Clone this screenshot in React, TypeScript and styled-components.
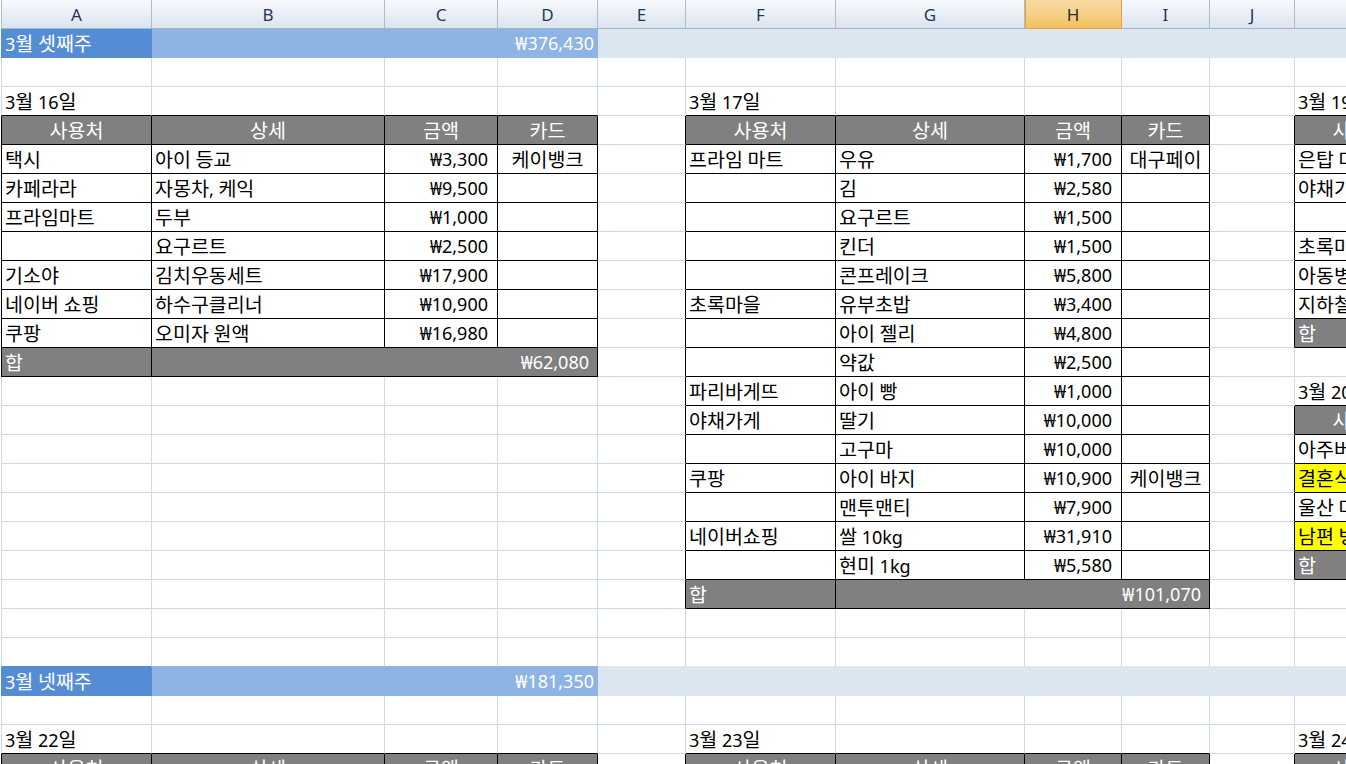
import React from "react";
import styled, { createGlobalStyle, css } from "styled-components";

const GlobalStyle = createGlobalStyle`
  html, body { margin: 0; padding: 0; background: #ffffff; overflow: hidden; }
  #root { width: 1346px; height: 764px; overflow: hidden; }
`;

const C = {
  gray: "#808080",
  dark: "#548DD4",
  mid: "#8DB4E2",
  light: "#DCE6F1",
  yellow: "#FFFF00",
  grid: "#D0D7E5",
  black: "#000000",
  white: "#FFFFFF",
};

const COLS = [
  { l: "A", w: 151 },
  { l: "B", w: 233 },
  { l: "C", w: 113 },
  { l: "D", w: 100 },
  { l: "E", w: 88 },
  { l: "F", w: 150 },
  { l: "G", w: 189 },
  { l: "H", w: 97 },
  { l: "I", w: 88 },
  { l: "J", w: 85 },
  { l: "K", w: 130 },
];
const NCOLS = COLS.length;
const NROWS = 26;
const SELECTED_COL = "H";

type Spec = {
  t?: string;
  a?: "l" | "c" | "r";
  bg?: string;
  fg?: string;
  span?: number;
  tb?: boolean;
  pr?: number;
  covered?: boolean;
};

function buildSheet(): Spec[][] {
  const g: Spec[][] = Array.from({ length: NROWS + 2 }, () =>
    Array.from({ length: NCOLS + 1 }, () => ({}))
  );
  const set = (r: number, c: number, s: Spec) => {
    if (c >= NCOLS) return;
    g[r][c] = { ...g[r][c], ...s };
  };

  const band = (r: number, label: string, total: string) => {
    set(r, 0, { t: label, bg: C.dark, fg: C.white });
    [1, 2, 3].forEach((c) => set(r, c, { bg: C.mid }));
    set(r, 3, { t: total, a: "r", fg: C.white, pr: 3 });
    for (let c = 4; c < NCOLS; c++) set(r, c, { bg: C.light });
  };

  const labels = ["사용처", "상세", "금액", "카드"];
  const header = (r: number, c0: number) => {
    labels.forEach((lb, i) =>
      set(r, c0 + i, { t: lb, a: "c", bg: C.gray, fg: C.white, tb: true })
    );
  };

  const item = (
    r: number,
    c0: number,
    place: string,
    detail: string,
    amount: string,
    card = "",
    bg?: string
  ) => {
    set(r, c0, { t: place, tb: true, bg });
    set(r, c0 + 1, { t: detail, tb: true });
    set(r, c0 + 2, { t: amount, a: "r", pr: 9, tb: true });
    set(r, c0 + 3, { t: card, a: "c", tb: true });
  };

  const sum = (r: number, c0: number, total: string) => {
    set(r, c0, { t: "합", bg: C.gray, fg: C.white, tb: true });
    set(r, c0 + 1, { t: total, a: "r", pr: 8, bg: C.gray, fg: C.white, tb: true, span: 3 });
    set(r, c0 + 2, { covered: true, bg: C.gray, tb: true });
    set(r, c0 + 3, { covered: true, bg: C.gray, tb: true });
  };

  // week 3
  band(1, "3월 셋째주", "₩376,430");

  // 3월 16일
  set(3, 0, { t: "3월 16일" });
  header(4, 0);
  item(5, 0, "택시", "아이 등교", "₩3,300", "케이뱅크");
  item(6, 0, "카페라라", "자몽차, 케익", "₩9,500");
  item(7, 0, "프라임마트", "두부", "₩1,000");
  item(8, 0, "", "요구르트", "₩2,500");
  item(9, 0, "기소야", "김치우동세트", "₩17,900");
  item(10, 0, "네이버 쇼핑", "하수구클리너", "₩10,900");
  item(11, 0, "쿠팡", "오미자 원액", "₩16,980");
  sum(12, 0, "₩62,080");

  // 3월 17일
  set(3, 5, { t: "3월 17일" });
  header(4, 5);
  item(5, 5, "프라임 마트", "우유", "₩1,700", "대구페이");
  item(6, 5, "", "김", "₩2,580");
  item(7, 5, "", "요구르트", "₩1,500");
  item(8, 5, "", "킨더", "₩1,500");
  item(9, 5, "", "콘프레이크", "₩5,800");
  item(10, 5, "초록마을", "유부초밥", "₩3,400");
  item(11, 5, "", "아이 젤리", "₩4,800");
  item(12, 5, "", "약값", "₩2,500");
  item(13, 5, "파리바게뜨", "아이 빵", "₩1,000");
  item(14, 5, "야채가게", "딸기", "₩10,000");
  item(15, 5, "", "고구마", "₩10,000");
  item(16, 5, "쿠팡", "아이 바지", "₩10,900", "케이뱅크");
  item(17, 5, "", "맨투맨티", "₩7,900");
  item(18, 5, "네이버쇼핑", "쌀 10kg", "₩31,910");
  item(19, 5, "", "현미 1kg", "₩5,580");
  sum(20, 5, "₩101,070");

  // 3월 19일 (partly visible)
  set(3, 10, { t: "3월 19일" });
  header(4, 10);
  item(5, 10, "은탑 마트", "", "");
  item(6, 10, "야채가게", "", "");
  item(7, 10, "", "", "");
  item(8, 10, "초록마을", "", "");
  item(9, 10, "아동병원", "", "");
  item(10, 10, "지하철", "", "");
  set(11, 10, { t: "합", bg: C.gray, fg: C.white, tb: true });

  // 3월 20일 (partly visible)
  set(13, 10, { t: "3월 20일" });
  header(14, 10);
  item(15, 10, "아주버님", "", "");
  item(16, 10, "결혼식", "", "", "", C.yellow);
  item(17, 10, "울산 마트", "", "");
  item(18, 10, "남편 병원", "", "", "", C.yellow);
  set(19, 10, { t: "합", bg: C.gray, fg: C.white, tb: true });

  // week 4
  band(23, "3월 넷째주", "₩181,350");
  set(25, 0, { t: "3월 22일" });
  set(25, 5, { t: "3월 23일" });
  set(25, 10, { t: "3월 24일" });
  header(26, 0);
  header(26, 5);
  header(26, 10);

  return g;
}

const sheet = buildSheet();

const inTable = (r: number, c: number) =>
  r >= 1 && r <= NROWS && c >= 0 && c < NCOLS && !!sheet[r][c].tb;
const fillOf = (r: number, c: number) =>
  r >= 1 && r <= NROWS && c >= 0 && c < NCOLS ? sheet[r][c].bg : undefined;

function rightColor(r: number, c: number, span: number) {
  const c2 = c + span - 1;
  if (inTable(r, c) || inTable(r, c2 + 1)) return C.black;
  return fillOf(r, c) || fillOf(r, c2 + 1) || C.grid;
}
function bottomColor(r: number, c: number) {
  if (inTable(r, c) || inTable(r + 1, c)) return C.black;
  return fillOf(r, c) || fillOf(r + 1, c) || C.grid;
}
function leftColor(r: number) {
  if (inTable(r, 0)) return C.black;
  return fillOf(r, 0) || C.grid;
}

/* ---------- styled parts ---------- */

const Sheet = styled.div`
  display: grid;
  grid-template-columns: ${COLS.map((c) => `${c.w}px`).join(" ")};
  grid-auto-rows: 29px;
  padding-left: 1px;
  width: max-content;
  font-family: "Noto Sans", "Noto Sans CJK KR", sans-serif;
`;

const ColHead = styled.div<{ $selected: boolean; $first: boolean }>`
  box-sizing: border-box;
  display: flex;
  align-items: center;
  justify-content: center;
  font-family: "Noto Sans", "Liberation Sans", sans-serif;
  font-size: 17px;
  color: #1f3756;
  border-right: 1px solid #a9bcd5;
  border-bottom: 1px solid #9eb6ce;
  background: linear-gradient(#f7f9fc, #e9eef5 55%, #dbe3ee);
  ${(p) =>
    p.$first &&
    css`
      border-left: 1px solid #a9bcd5;
    `}
  ${(p) =>
    p.$selected &&
    css`
      background: linear-gradient(#f9dba5, #f5cf85 50%, #f1c15f);
      border-right-color: #f29d39;
      border-bottom-color: #f29d39;
      box-shadow: inset 1px 0 0 #f29d39;
      color: #2b2b2b;
    `}
`;

const Cell = styled.div<{
  $span: number;
  $align: "l" | "c" | "r";
  $bg: string;
  $fg: string;
  $rb: string;
  $bb: string;
  $lb?: string;
  $pr: number;
}>`
  grid-column: span ${(p) => p.$span};
  box-sizing: border-box;
  height: 29px;
  display: flex;
  align-items: center;
  justify-content: ${(p) =>
    p.$align === "r" ? "flex-end" : p.$align === "c" ? "center" : "flex-start"};
  padding: 0 ${(p) => p.$pr}px 1px 3px;
  background: ${(p) => p.$bg};
  color: ${(p) => p.$fg};
  border-right: 1px solid ${(p) => p.$rb};
  border-bottom: 1px solid ${(p) => p.$bb};
  ${(p) =>
    p.$lb &&
    css`
      border-left: 1px solid ${p.$lb};
    `}
  font-size: 18px;
  line-height: 1;
  white-space: nowrap;
  overflow: hidden;
`;

const CellText = styled.span`
  line-height: 1;
`;

/* Hangul in the reference (Malgun Gothic) is wider than Noto's at the same size */
const Hangul = styled.span`
  font-family: "Noto Sans CJK KR", sans-serif;
  font-size: 1.085em;
  line-height: 1;
`;

function renderText(t?: string) {
  if (!t) return null;
  const parts = t.split(/([\uAC00-\uD7A3]+)/).filter((p) => p !== "");
  return (
    <CellText>
      {parts.map((p, i) =>
        /[\uAC00-\uD7A3]/.test(p) ? <Hangul key={i}>{p}</Hangul> : <React.Fragment key={i}>{p}</React.Fragment>
      )}
    </CellText>
  );
}

export default function App() {
  const cells: React.ReactNode[] = [];
  for (let r = 1; r <= NROWS; r++) {
    for (let c = 0; c < NCOLS; c++) {
      const s = sheet[r][c];
      if (s.covered) continue;
      const span = s.span ?? 1;
      cells.push(
        <Cell
          key={`${r}-${c}`}
          $span={span}
          $align={s.a ?? "l"}
          $bg={s.bg ?? C.white}
          $fg={s.fg ?? C.black}
          $rb={rightColor(r, c, span)}
          $bb={bottomColor(r, c)}
          $lb={c === 0 ? leftColor(r) : undefined}
          $pr={s.pr ?? 3}
        >
          {renderText(s.t)}
        </Cell>
      );
    }
  }

  return (
    <>
      <GlobalStyle />
      <Sheet>
        {COLS.map((col, i) => (
          <ColHead key={col.l} $selected={col.l === SELECTED_COL} $first={i === 0}>
            {col.l}
          </ColHead>
        ))}
        {cells}
      </Sheet>
    </>
  );
}
